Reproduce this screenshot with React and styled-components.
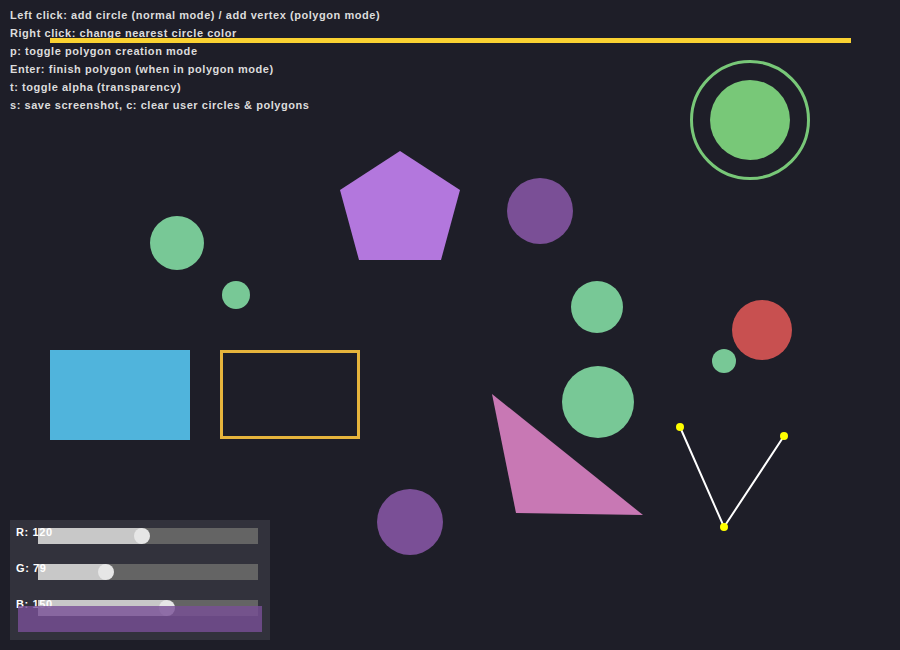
import React from "react";
import styled, { createGlobalStyle } from "styled-components";

const GlobalStyle = createGlobalStyle`
  html, body {
    margin: 0;
    padding: 0;
    background: #1e1e28;
  }
`;

const helpLines = [
  "Left click: add circle (normal mode) / add vertex (polygon mode)",
  "Right click: change nearest circle color",
  "p: toggle polygon creation mode",
  "Enter: finish polygon (when in polygon mode)",
  "t: toggle alpha (transparency)",
  "s: save screenshot, c: clear user circles & polygons",
];

const circles = [
  { cx: 177, cy: 243, r: 27, fill: "#78c896" },
  { cx: 236, cy: 295, r: 14, fill: "#78c896" },
  { cx: 540, cy: 211, r: 33, fill: "#7a4f96" },
  { cx: 597, cy: 307, r: 26, fill: "#78c896" },
  { cx: 598, cy: 402, r: 36, fill: "#78c896" },
  { cx: 724, cy: 361, r: 12, fill: "#78c896" },
  { cx: 762, cy: 330, r: 30, fill: "#c85050" },
  { cx: 410, cy: 522, r: 33, fill: "#7a4f96" },
  { cx: 750, cy: 120, r: 40, fill: "#78c878" },
];

const polyPoints = [
  [680, 427],
  [724, 527],
  [784, 436],
];

const sliders = [
  { name: "R", value: 120 },
  { name: "G", value: 79 },
  { name: "B", value: 150 },
];

const Stage = styled.div`
  position: relative;
  width: 900px;
  height: 650px;
  overflow: hidden;
  background: #1e1e28;
  font-family: "Liberation Sans", Arial, sans-serif;
`;

const HelpList = styled.ul`
  list-style: none;
  margin: 0;
  padding: 6px 10px 0;
  display: flex;
  flex-direction: column;
`;

const HelpLine = styled.li`
  font-size: 11px;
  font-weight: bold;
  line-height: 18px;
  letter-spacing: 0.55px;
  color: #dcdcdc;
  white-space: nowrap;
`;

const Canvas = styled.svg`
  position: absolute;
  inset: 0;
  pointer-events: none;
`;

const Panel = styled.div`
  position: absolute;
  left: 10px;
  top: 520px;
  width: 260px;
  height: 120px;
  box-sizing: border-box;
  padding-top: 8px;
  background: #32323c;
  display: flex;
  flex-direction: column;
  gap: 20px;
`;

const SliderRow = styled.div`
  position: relative;
  height: 16px;
  padding-left: 28px;
`;

const Track = styled.div`
  position: relative;
  width: 220px;
  height: 16px;
  background: #646464;
`;

const Fill = styled.div`
  height: 100%;
  background: #c8c8c8;
`;

const Knob = styled.div`
  position: absolute;
  top: 0;
  width: 16px;
  height: 16px;
  margin-left: -8px;
  border-radius: 50%;
  background: #e6e6e6;
`;

const SliderLabel = styled.span`
  position: absolute;
  left: 6px;
  top: -4px;
  font-size: 11px;
  font-weight: bold;
  line-height: 16px;
  letter-spacing: 0.6px;
  color: #ffffff;
  white-space: nowrap;
`;

const Preview = styled.div`
  position: absolute;
  left: 8px;
  top: 86px;
  width: 244px;
  height: 26px;
  background: ${(p) => `rgba(${p.$r}, ${p.$g}, ${p.$b}, 0.8)`};
`;

const Slider = ({ name, value }) => {
  const x = (value / 255) * 220;
  return (
    <SliderRow>
      <Track>
        <Fill style={{ width: x }} />
        <Knob style={{ left: x }} />
      </Track>
      <SliderLabel>
        {name}: {value}
      </SliderLabel>
    </SliderRow>
  );
};

const Scene = () => (
  <Canvas width="900" height="650" viewBox="0 0 900 650">
    <line x1="50" y1="40.5" x2="851" y2="40.5" stroke="#fad232" strokeWidth="5" />
    <polygon points="400,151 460,190 441,260 359,260 340,190" fill="#b377dd" />
    <rect x="50" y="350" width="140" height="90" fill="#50b4dc" />
    <rect x="221.5" y="351.5" width="137" height="86" fill="none" stroke="#e6b43c" strokeWidth="3" />
    <polygon points="492,394 643,515 516,513" fill="#c878b4" />
    {circles.map((c, i) => (
      <circle key={i} cx={c.cx} cy={c.cy} r={c.r} fill={c.fill} />
    ))}
    <circle cx="750" cy="120" r="58.5" fill="none" stroke="#78c878" strokeWidth="3" />
    <polyline
      points={polyPoints.map((p) => p.join(",")).join(" ")}
      fill="none"
      stroke="#ffffff"
      strokeWidth="2"
    />
    {polyPoints.map(([x, y], i) => (
      <circle key={i} cx={x} cy={y} r="4" fill="#ffff00" />
    ))}
  </Canvas>
);

const App = () => (
  <Stage>
    <GlobalStyle />
    <HelpList>
      {helpLines.map((line) => (
        <HelpLine key={line}>{line}</HelpLine>
      ))}
    </HelpList>
    <Scene />
    <Panel>
      {sliders.map((s) => (
        <Slider key={s.name} {...s} />
      ))}
      <Preview $r={120} $g={79} $b={150} />
    </Panel>
  </Stage>
);

export default App;
